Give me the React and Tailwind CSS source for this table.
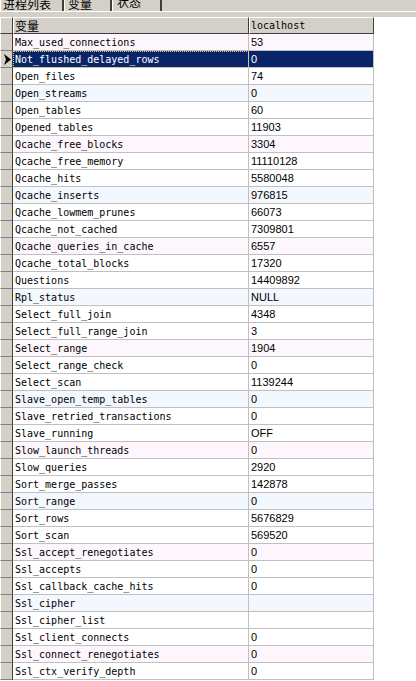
const rows = [
  ["Max_used_connections", "53"],
  ["Not_flushed_delayed_rows", "0"],
  ["Open_files", "74"],
  ["Open_streams", "0"],
  ["Open_tables", "60"],
  ["Opened_tables", "11903"],
  ["Qcache_free_blocks", "3304"],
  ["Qcache_free_memory", "11110128"],
  ["Qcache_hits", "5580048"],
  ["Qcache_inserts", "976815"],
  ["Qcache_lowmem_prunes", "66073"],
  ["Qcache_not_cached", "7309801"],
  ["Qcache_queries_in_cache", "6557"],
  ["Qcache_total_blocks", "17320"],
  ["Questions", "14409892"],
  ["Rpl_status", "NULL"],
  ["Select_full_join", "4348"],
  ["Select_full_range_join", "3"],
  ["Select_range", "1904"],
  ["Select_range_check", "0"],
  ["Select_scan", "1139244"],
  ["Slave_open_temp_tables", "0"],
  ["Slave_retried_transactions", "0"],
  ["Slave_running", "OFF"],
  ["Slow_launch_threads", "0"],
  ["Slow_queries", "2920"],
  ["Sort_merge_passes", "142878"],
  ["Sort_range", "0"],
  ["Sort_rows", "5676829"],
  ["Sort_scan", "569520"],
  ["Ssl_accept_renegotiates", "0"],
  ["Ssl_accepts", "0"],
  ["Ssl_callback_cache_hits", "0"],
  ["Ssl_cipher", ""],
  ["Ssl_cipher_list", ""],
  ["Ssl_client_connects", "0"],
  ["Ssl_connect_renegotiates", "0"],
  ["Ssl_ctx_verify_depth", "0"],
];

const mono = { fontFamily: "'DejaVu Sans Mono', 'Liberation Mono', monospace" };

// tint every third row, alternating pink / blue
const rowBg = (i) => {
  if (i % 6 === 0) return "bg-[#fdf7fd]";
  if (i % 6 === 3) return "bg-[#f3f7fe]";
  return "bg-white";
};

const App = () => {
  return (
    <div
      className="w-[416px] h-[681px] overflow-hidden bg-white text-black"
      style={{ fontFamily: "'Liberation Sans', 'Noto Sans CJK SC', sans-serif" }}
    >
      {/* Tabs */}
      <div className="h-[11px] flex bg-[#d4d0c8] overflow-hidden text-[12px] leading-[12px]" style={{ fontFamily: "'Noto Sans CJK SC', sans-serif" }}>
        <div className="w-[64px] border-l border-l-white border-r-2 border-r-[#404040] pl-[2px] -mt-[2px]">进程列表</div>
        <div className="w-[48px] border-l border-l-white border-r-2 border-r-[#404040] pl-[3px] -mt-[2px]">变量</div>
        <div className="w-[50px] border-l border-l-white border-r-2 border-r-[#404040] pl-[4px] -mt-[4px]">状态</div>
        <div className="flex-1" />
      </div>
      <div className="h-px bg-white" />
      <div className="h-[5px] bg-[#d4d0c8]" />

      {/* Header */}
      <div className="flex h-[17px]">
        <div className="w-[13px] bg-[#d4d0c8] border-t border-l border-white border-b border-b-[#404040] border-r border-r-[#404040]" />
        <div
          className="w-[236px] bg-[#d4d0c8] border-t border-l border-white border-b border-b-[#404040] border-r border-r-[#404040] pl-[1px] pt-px text-[12px] leading-[14px]"
          style={{ fontFamily: "'Noto Sans CJK SC', sans-serif" }}
        >
          变量
        </div>
        <div
          className="w-[125px] bg-[#d4d0c8] border-t border-l border-white border-b border-b-[#404040] border-r border-r-[#404040] pl-[1px] pt-px text-[10px] leading-[14px]"
          style={mono}
        >
          localhost
        </div>
      </div>

      {/* Rows */}
      {rows.map(([name, value], i) => {
        const selected = i === 1;
        return (
          <div key={name} className="flex h-[17px]">
            <div className="w-[13px] bg-[#d4d0c8] border-l border-l-white border-b border-b-[#808080] border-r border-r-[#404040] flex items-center">
              {selected && (
                <svg width="8" height="11" viewBox="0 0 8 11" className="ml-[3px]">
                  <polygon points="0,0 7,5.5 0,11 2,5.5" fill="#000" />
                </svg>
              )}
            </div>
            <div
              className={`w-[236px] border-b border-r border-[#c0c0c0] text-[10px] leading-[15px] pt-px pl-[2px] ${
                selected ? "bg-[#0a246a] text-white outline-1 outline-dotted outline-[#e8c860] -outline-offset-1" : rowBg(i)
              }`}
              style={mono}
            >
              {name}
            </div>
            <div
              className={`w-[125px] border-b border-r border-[#c0c0c0] text-[11px] leading-[15px] pt-px pl-[2px] ${
                selected ? "bg-[#0a246a] text-white" : rowBg(i)
              }`}
            >
              {value}
            </div>
          </div>
        );
      })}
    </div>
  );
};

export default App;
